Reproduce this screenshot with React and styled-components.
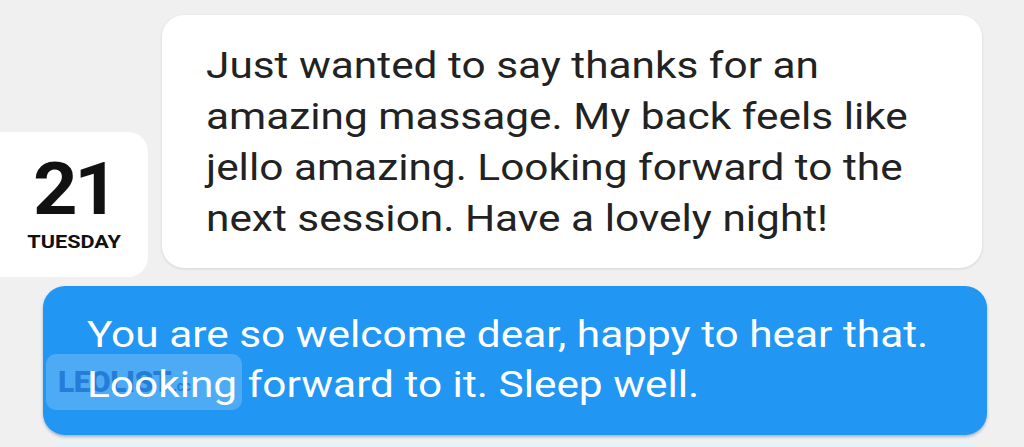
import React from "react";
import styled, { createGlobalStyle } from "styled-components";

const Global = createGlobalStyle`
  html, body { margin: 0; padding: 0; background: #f0f0f0; }
  body { font-family: Roboto, "Noto Sans", sans-serif; overflow: hidden; }
  * { box-sizing: border-box; }
`;

const Page = styled.div`
  width: 1024px;
  height: 447px;
  background: #f0f0f0;
  display: flex;
  flex-direction: column;
  padding-top: 15px;
  position: relative;
  overflow: hidden;
`;

const TopRow = styled.div`
  display: flex;
  align-items: flex-start;
  gap: 14px;
`;

const DateCard = styled.div`
  margin-top: 117px;
  width: 148px;
  height: 145px;
  background: #ffffff;
  border-radius: 0 20px 20px 0;
  display: flex;
  flex-direction: column;
  align-items: center;
  padding-top: 22px;
  color: #111;
`;

const DayNum = styled.div`
  font-family: Roboto, sans-serif;
  font-weight: 700;
  font-size: 72px;
  line-height: 72px;
  letter-spacing: -3px;
  transform: scaleX(1.08);
`;

const DayName = styled.div`
  font-family: Roboto, sans-serif;
  font-weight: 700;
  font-size: 19px;
  line-height: 20px;
  margin-top: 6px;
  transform: scaleX(1.14);
`;

const Bubble = styled.div`
  position: relative;
  border-radius: 22px;
  font-family: Roboto, sans-serif;
  font-size: 36px;
  line-height: ${(p) => (p.$mine ? 50 : 51)}px;
  background: ${(p) => (p.$mine ? "#2196f3" : "#ffffff")};
  color: ${(p) => (p.$mine ? "#ffffff" : "#222222")};
  box-shadow: ${(p) =>
    p.$mine
      ? "0 2px 3px rgba(20, 80, 140, 0.35)"
      : "0 1px 3px rgba(0, 0, 0, 0.12)"};
  width: ${(p) => p.$w}px;
  height: ${(p) => p.$h}px;
  margin-left: ${(p) => p.$ml || 0}px;
  margin-top: ${(p) => p.$mt || 0}px;
  padding: ${(p) => p.$pad};
  overflow: hidden;
`;

const Text = styled.div`
  position: relative;
  z-index: 2;
  white-space: pre;
  transform: scaleX(1.177);
  transform-origin: left top;
`;

const Watermark = styled.div`
  position: absolute;
  left: 3px;
  top: 68px;
  width: 196px;
  height: 56px;
  border-radius: 10px;
  background: rgba(255, 255, 255, 0.2);
  z-index: 1;
  display: flex;
  align-items: center;
  padding-left: 12px;
  font-family: Roboto, sans-serif;
  font-weight: 900;
  font-size: 30px;
  color: rgba(25, 110, 205, 0.75);
  letter-spacing: -0.5px;
`;

const WatermarkSmall = styled.span`
  font-size: 14px;
  font-weight: 700;
  margin-left: 2px;
  margin-top: 8px;
`;

const BottomStrip = styled.div`
  margin-top: 8px;
  margin-left: 55px;
  width: 920px;
  height: 4px;
  background: #def6fb;
`;

export default function App() {
  return (
    <>
      <Global />
      <Page>
        <TopRow>
          <DateCard>
            <DayNum>21</DayNum>
            <DayName>TUESDAY</DayName>
          </DateCard>
          <Bubble $w={820} $h={253} $pad="26px 20px 0 44px">
            <Text>
              {"Just wanted to say thanks for an\namazing massage. My back feels like\njello amazing. Looking forward to the\nnext session. Have a lovely night!"}
            </Text>
          </Bubble>
        </TopRow>
        <Bubble $mine $w={944} $h={151} $ml={43} $mt={9} $pad="24px 20px 0 44px">
          <Watermark>
            LEOLIST<WatermarkSmall>.cc</WatermarkSmall>
          </Watermark>
          <Text>
            {"You are so welcome dear, happy to hear that.\nLooking forward to it. Sleep well."}
          </Text>
        </Bubble>
        <BottomStrip />
      </Page>
    </>
  );
}
